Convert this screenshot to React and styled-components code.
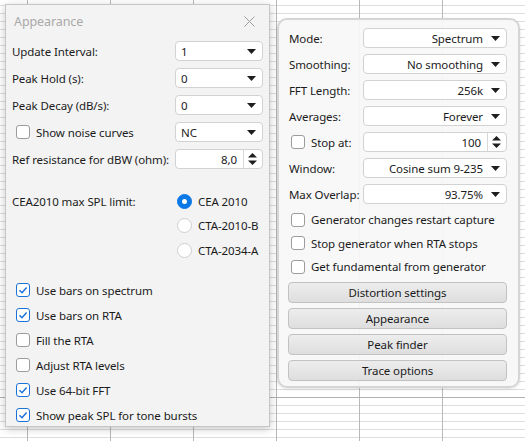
import React from 'react';
import styled, { createGlobalStyle } from 'styled-components';

const GlobalStyle = createGlobalStyle`
  html, body { margin: 0; padding: 0; }
  body {
    font-family: "Noto Sans", "Open Sans", sans-serif;
    font-size: 11.5px;
    letter-spacing: -0.1px;
    color: #1b1b1b;
  }
`;

const Desktop = styled.div`
  position: relative;
  width: 525px;
  height: 441px;
  overflow: hidden;
  background-color: #fff;
  background-image:
    linear-gradient(#b0b0b0, #b0b0b0),
    repeating-linear-gradient(90deg, transparent 0 27px, #b8b8b8 27px 28px, transparent 28px 83px),
    repeating-linear-gradient(180deg, transparent 0 5px, #dedede 5px 6px, transparent 6px 8px);
  background-size: 100% 1px, 100% 100%, 100% 100%;
  background-position: 0 397px, 0 0, 0 0;
  background-repeat: no-repeat, repeat, repeat;
`;

const Dialog = styled.div`
  position: absolute;
  left: 5px;
  top: 4px;
  width: 265px;
  height: 423px;
  box-sizing: border-box;
  background: #f3f3f3;
  border: 1px solid #c6c6c6;
  box-shadow: 0 2px 8px rgba(0, 0, 0, 0.22);
`;

const TitleBar = styled.div`
  display: flex;
  align-items: center;
  justify-content: space-between;
  height: 32px;
  padding: 0 14px 0 8px;
`;

const Title = styled.span`
  color: #a9a9a9;
  font-size: 12.5px;
`;

const DialogBody = styled.div`
  padding: 4px 6px 0 6px;
`;

const FormGrid = styled.div`
  display: grid;
  grid-template-columns: ${p => p.cols};
  row-gap: ${p => p.gap}px;
  align-items: center;
`;

const Label = styled.div`
  display: flex;
  align-items: center;
  height: 20px;
  white-space: nowrap;
`;

const Field = styled.div`
  position: relative;
  display: flex;
  align-items: center;
  justify-content: ${p => (p.right ? 'flex-end' : 'flex-start')};
  height: 20px;
  box-sizing: border-box;
  background: #fff;
  border: 1px solid #d2d2d2;
  border-radius: 4px;
  padding: 0 23px 0 5px;
  white-space: nowrap;
`;

const SpinField = styled(Field)`
  padding: 0 25px 0 5px;
  justify-content: flex-end;
`;

const ArrowBox = styled.span`
  position: absolute;
  right: ${p => p.r}px;
  top: 0;
  bottom: 0;
  display: flex;
  align-items: center;
`;

const SpinDivider = styled.span`
  position: absolute;
  right: 18px;
  top: 0;
  bottom: 0;
  width: 1px;
  background: #d8d8d8;
`;

const CheckRow = styled.label`
  display: flex;
  align-items: center;
  gap: ${p => p.gap}px;
  height: ${p => p.h}px;
  padding-left: ${p => p.indent}px;
  white-space: nowrap;
`;

const Box = styled.span`
  display: inline-flex;
  align-items: center;
  justify-content: center;
  width: 14px;
  height: 14px;
  box-sizing: border-box;
  background: #fff;
  border: 1px solid ${p => (p.checked ? '#1a73d9' : '#9c9c9c')};
  border-radius: 3px;
  flex: none;
`;

const RadioSection = styled.div`
  display: grid;
  grid-template-columns: minmax(0, 1fr) 86px;
  margin-top: 20px;
`;

const RadioLabel = styled.div`
  display: flex;
  align-items: center;
  height: 24px;
`;

const RadioList = styled.div`
  display: flex;
  flex-direction: column;
`;

const RadioItem = styled.div`
  display: flex;
  align-items: center;
  gap: 6px;
  height: 24.5px;
`;

const RadioCircle = styled.span`
  display: inline-flex;
  align-items: center;
  justify-content: center;
  width: 15px;
  height: 15px;
  box-sizing: border-box;
  border-radius: 50%;
  background: ${p => (p.checked ? '#0a78e6' : '#fff')};
  border: 1px solid ${p => (p.checked ? '#0a78e6' : '#cfcfcf')};
  flex: none;

  &::after {
    content: '';
    display: ${p => (p.checked ? 'block' : 'none')};
    width: 5px;
    height: 5px;
    border-radius: 50%;
    background: #fff;
  }
`;

const CheckList = styled.div`
  margin-top: 15px;
  display: flex;
  flex-direction: column;
`;

const Panel = styled.div`
  position: absolute;
  left: 277px;
  top: 18px;
  width: 243px;
  height: 370px;
  box-sizing: border-box;
  border: 2px solid #d5d5d5;
  border-radius: 10px;
  background: rgba(247, 247, 247, 0.93);
  box-shadow: 0 1px 3px rgba(0, 0, 0, 0.12);
  padding: 8px 11px 0 10px;
`;

const PanelChecks = styled.div`
  margin-top: 4px;
  display: flex;
  flex-direction: column;
`;

const ButtonStack = styled.div`
  margin-top: 3px;
  display: flex;
  flex-direction: column;
  gap: 5px;
`;

const Button = styled.div`
  display: flex;
  align-items: center;
  justify-content: center;
  height: 21px;
  box-sizing: border-box;
  margin-left: -1px;
  background: linear-gradient(#ededed, #dedede);
  border: 1px solid #c2c2c2;
  border-radius: 4px;
  color: #1b1b1b;
`;

const Arrow = () => (
  <svg width="9" height="5" viewBox="0 0 9 5">
    <polygon points="0,0 9,0 4.5,5" fill="#1e1e1e" />
  </svg>
);

const SpinArrows = () => (
  <svg width="9" height="12" viewBox="0 0 9 12">
    <polygon points="4.5,0 9,4.5 0,4.5" fill="#1e1e1e" />
    <polygon points="0,7.5 9,7.5 4.5,12" fill="#1e1e1e" />
  </svg>
);

const Combo = ({ value, right }) => (
  <Field right={right}>
    {value}
    <ArrowBox r={6}><Arrow /></ArrowBox>
  </Field>
);

const Spinner = ({ value }) => (
  <SpinField>
    {value}
    <SpinDivider />
    <ArrowBox r={5}><SpinArrows /></ArrowBox>
  </SpinField>
);

const Check = ({ checked }) => (
  <Box checked={checked}>
    {checked && (
      <svg width="10" height="10" viewBox="0 0 10 10">
        <path d="M1.5 5.2 L4 7.7 L8.6 2.4" fill="none" stroke="#1a73d9" strokeWidth="1.5" />
      </svg>
    )}
  </Box>
);

const CloseIcon = () => (
  <svg width="11" height="11" viewBox="0 0 11 11">
    <path d="M0.5 0.5 L10.5 10.5 M10.5 0.5 L0.5 10.5" stroke="#9e9e9e" strokeWidth="1" />
  </svg>
);

const dialogChecks = [
  ['Use bars on spectrum', true],
  ['Use bars on RTA', true],
  ['Fill the RTA', false],
  ['Adjust RTA levels', false],
  ['Use 64-bit FFT', true],
  ['Show peak SPL for tone bursts', true],
];

const panelChecks = [
  'Generator changes restart capture',
  'Stop generator when RTA stops',
  'Get fundamental from generator',
];

const buttons = ['Distortion settings', 'Appearance', 'Peak finder', 'Trace options'];

export default function App() {
  return (
    <Desktop>
      <GlobalStyle />
      <Dialog>
        <TitleBar>
          <Title>Appearance</Title>
          <CloseIcon />
        </TitleBar>
        <DialogBody>
          <FormGrid cols="minmax(0, 1fr) 88px" gap={7}>
            <Label>Update Interval:</Label>
            <Combo value="1" />
            <Label>Peak Hold (s):</Label>
            <Combo value="0" />
            <Label>Peak Decay (dB/s):</Label>
            <Combo value="0" />
            <CheckRow gap={6} h={20} indent={4}>
              <Check checked={false} />
              Show noise curves
            </CheckRow>
            <Combo value="NC" />
            <Label>Ref resistance for dBW (ohm):</Label>
            <Spinner value="8,0" />
          </FormGrid>
          <RadioSection>
            <RadioLabel>CEA2010 max SPL limit:</RadioLabel>
            <RadioList>
              <RadioItem><RadioCircle checked />CEA 2010</RadioItem>
              <RadioItem><RadioCircle />CTA-2010-B</RadioItem>
              <RadioItem><RadioCircle />CTA-2034-A</RadioItem>
            </RadioList>
          </RadioSection>
          <CheckList>
            {dialogChecks.map(([text, on]) => (
              <CheckRow key={text} gap={6} h={25} indent={4}>
                <Check checked={on} />
                {text}
              </CheckRow>
            ))}
          </CheckList>
        </DialogBody>
      </Dialog>

      <Panel>
        <FormGrid cols="74px minmax(0, 1fr)" gap={6}>
          <Label>Mode:</Label>
          <Combo right value="Spectrum" />
          <Label>Smoothing:</Label>
          <Combo right value="No smoothing" />
          <Label>FFT Length:</Label>
          <Combo right value="256k" />
          <Label>Averages:</Label>
          <Combo right value="Forever" />
          <CheckRow gap={6} h={20} indent={2}>
            <Check checked={false} />
            Stop at:
          </CheckRow>
          <Spinner value="100" />
          <Label>Window:</Label>
          <Combo right value="Cosine sum 9-235" />
          <Label>Max Overlap:</Label>
          <Combo right value="93.75%" />
        </FormGrid>
        <PanelChecks>
          {panelChecks.map(text => (
            <CheckRow key={text} gap={6} h={23.5} indent={2}>
              <Check checked={false} />
              {text}
            </CheckRow>
          ))}
        </PanelChecks>
        <ButtonStack>
          {buttons.map(b => <Button key={b}>{b}</Button>)}
        </ButtonStack>
      </Panel>
    </Desktop>
  );
}
